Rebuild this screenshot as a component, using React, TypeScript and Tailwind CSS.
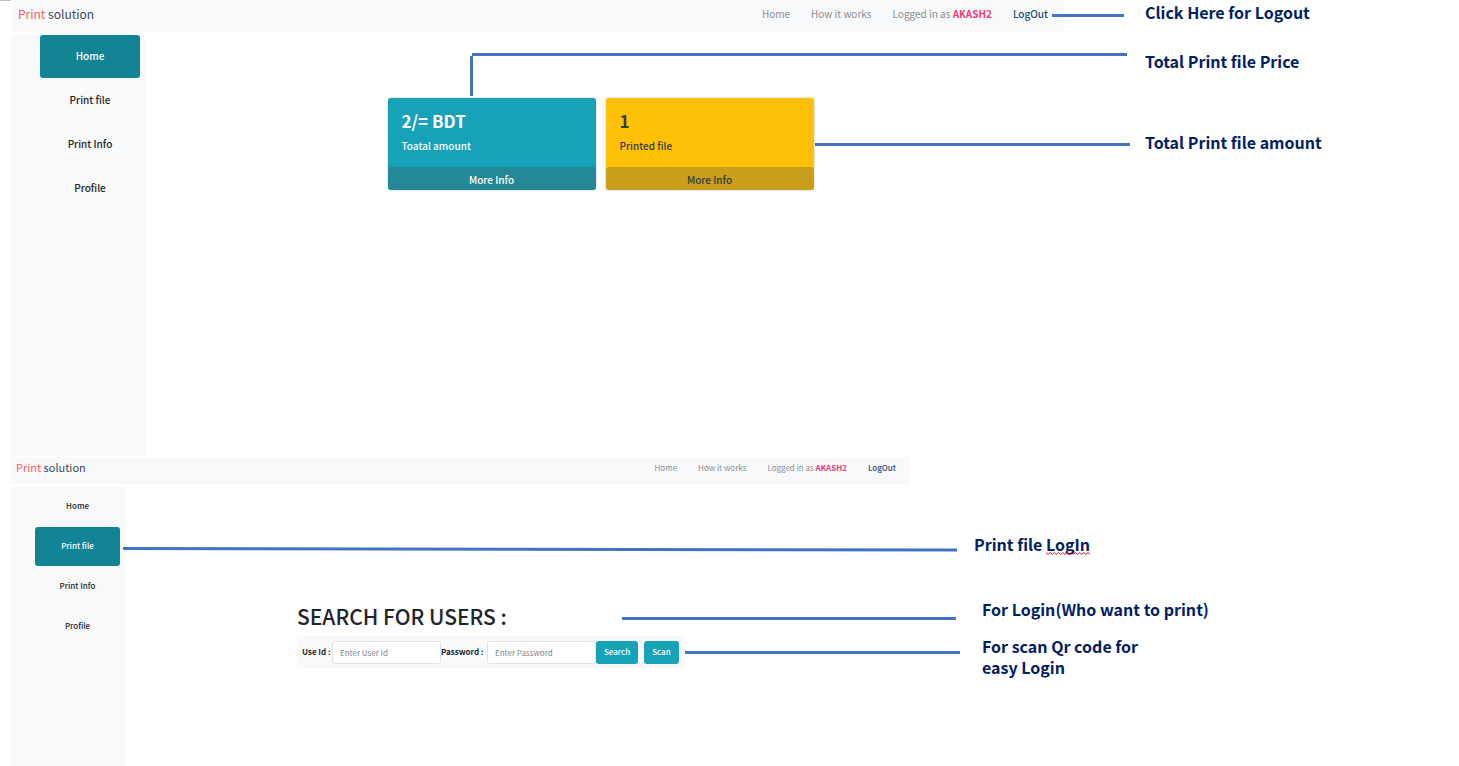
import React from "react";

type Size = "large" | "small";

const menu = ["Home", "Print file", "Print Info", "Profile"];

function TopBar({ size }: { size: Size }) {
  const large = size === "large";
  return (
    <header
      className={
        large
          ? "ml-px flex h-8 items-start justify-between bg-[#f8f9fb] pl-1.5 pr-4 pt-1"
          : "flex h-[27px] items-start justify-between bg-[#f8f9fb] pl-[5px] pr-3.5"
      }
    >
      <a
        href="#"
        className={
          large
            ? "text-[12px] leading-5 text-[#3d4654]"
            : "text-[11px] leading-5 text-[#3d4654]"
        }
      >
        <span className="text-[#ff5a5f]">Print</span> solution
      </a>
      <nav
        className={
          large
            ? "flex gap-[21px] text-[10px] leading-5 text-[#8b8c8e]"
            : "flex gap-[21px] text-[8px] leading-[22px] text-[#8b8c8e]"
        }
      >
        <a href="#">Home</a>
        <a href="#">How it works</a>
        <span>
          Logged in as <b className="text-[#ec407a]">AKASH2</b>
        </span>
        <a href="#" className="font-medium text-[#1f4a73]">
          LogOut
        </a>
      </nav>
    </header>
  );
}

function SideMenu({ size, active }: { size: Size; active: string }) {
  const large = size === "large";
  return (
    <nav
      className={
        large
          ? "flex w-[134px] shrink-0 flex-col gap-px bg-[#f8f9fb] pl-[29px] pr-[5px] text-[10px]"
          : "flex w-[114px] shrink-0 flex-col gap-px bg-[#f8f9fb] pl-6 pr-[5px] text-[8px]"
      }
    >
      {menu.map((item) => (
        <a
          key={item}
          href="#"
          className={`flex items-center justify-center rounded-[3px] pb-0.5 font-medium ${
            large ? "h-[43px]" : "h-[39px]"
          } ${item === active ? "bg-[#138496] text-white" : "text-[#212529]"}`}
        >
          {item}
        </a>
      ))}
    </nav>
  );
}

function Card(props: { value: string; label: string; tone: string; foot: string }) {
  return (
    <article
      className={`w-[208px] overflow-hidden rounded-[3px] shadow-[0_0_2px_rgba(0,0,0,0.3)] ${props.tone}`}
    >
      <div className="h-[69px] px-3.5 pt-[11px]">
        <h3 className="text-[17px] font-bold leading-6">{props.value}</h3>
        <p className="pt-[5px] text-[10px] font-medium leading-4">{props.label}</p>
      </div>
      <a
        href="#"
        className={`block h-[23px] rounded-[3px] text-center text-[10px] font-medium leading-[26px] ${props.foot}`}
      >
        More Info
      </a>
    </article>
  );
}

function Connectors() {
  return (
    <svg
      className="pointer-events-none absolute inset-0 h-full w-full"
      viewBox="0 0 1459 766"
      preserveAspectRatio="none"
      stroke="#4472c4"
      strokeWidth="3"
      fill="none"
      aria-hidden="true"
    >
      <path d="M1052 15.5H1124" />
      <path d="M472 54.5H1127" />
      <path d="M471.500 56V96" />
      <path d="M815 144.500H1130" />
      <path d="M123 548.500L957 550" />
      <path d="M622 618.500H956" />
      <path d="M685 652.500H960" />
      <path d="M0 0.500H11" stroke="#c0c0c0" strokeWidth="1" />
    </svg>
  );
}

function Squiggle() {
  return (
    <svg
      className="absolute left-0 top-full -mt-1 h-[3px] w-full"
      viewBox="0 0 42 3"
      preserveAspectRatio="none"
      fill="none"
      stroke="#e00000"
      strokeWidth="0.9"
      aria-hidden="true"
    >
      <path d="M0 .5l2 2 2-2 2 2 2-2 2 2 2-2 2 2 2-2 2 2 2-2 2 2 2-2 2 2 2-2 2 2 2-2 2 2 2-2 2 2 2-2 2 2" />
    </svg>
  );
}

const inputClass =
  "h-[23px] w-[109px] rounded-[3px] border border-[#dfe2e6] bg-white px-[7px] text-[8px] font-normal text-[#495057] placeholder:text-[#7d858c]";
const buttonClass =
  "h-[23px] rounded-[3px] bg-[#17a2b8] px-2 text-[8px] font-medium text-white";

export default function App() {
  return (
    <main className="relative flex min-h-screen flex-col bg-white pl-[11px] font-['Noto_Sans_CJK_SC',sans-serif]">
      <section className="grid grid-cols-[1053fr_395fr]">
        <div className="flex flex-col gap-[3px]">
          <TopBar size="large" />
          <div className="flex h-[421px]">
            <SideMenu size="large" active="Home" />
            <div className="flex flex-1 items-start justify-center gap-2.5 pr-2 pt-[63px]">
              <Card
                value="2/= BDT"
                label="Toatal amount"
                tone="bg-[#17a2b8] text-white"
                foot="bg-[#258896]"
              />
              <Card
                value="1"
                label="Printed file"
                tone="bg-[#ffc107] text-[#343a40]"
                foot="bg-[#c99e1a]"
              />
            </div>
          </div>
        </div>
        <aside className="flex flex-col pl-[81px] text-[16px] font-bold leading-6 text-[#002060]">
          <p>Click Here for Logout</p>
          <p className="pt-[25px]">Total Print file Price</p>
          <p className="pt-[57px]">Total Print file amount</p>
        </aside>
      </section>

      <section className="grid flex-1 grid-cols-[899fr_549fr] pt-px">
        <div className="flex flex-col gap-[3px]">
          <TopBar size="small" />
          <div className="flex flex-1">
            <SideMenu size="small" active="Print file" />
            <div className="flex flex-1 flex-col items-start pl-[172px] pt-[113px]">
              <h2 className="text-[21px] font-medium leading-8 text-[#212529]">
                SEARCH FOR USERS :
              </h2>
              <form
                className="mt-1 flex h-8 items-center bg-[#f8f9fb] px-[5px] text-[8px] font-bold text-[#212529]"
                onSubmit={(e) => e.preventDefault()}
              >
                <label htmlFor="user-id" className="w-[30px] whitespace-nowrap">
                  Use Id :
                </label>
                <input id="user-id" type="text" placeholder="Enter User Id" className={inputClass} />
                <label htmlFor="password" className="w-[46px] whitespace-nowrap">
                  Password :
                </label>
                <input
                  id="password"
                  type="password"
                  placeholder="Enter Password"
                  className={inputClass}
                />
                <button type="submit" className={buttonClass}>
                  Search
                </button>
                <button type="button" className={`${buttonClass} ml-1.5`}>
                  Scan
                </button>
              </form>
            </div>
          </div>
        </div>
        <aside className="flex flex-col items-start pl-16 pt-[75px] text-[16px] font-bold leading-6 text-[#002060]">
          <p>
            Print file{" "}
            <span className="relative inline-block">
              LogIn
              <Squiggle />
            </span>
          </p>
          <p className="ml-2 pt-[41px]">For Login(Who want to print)</p>
          <p className="ml-2 w-44 pt-[15px] leading-[21px]">For scan Qr code for easy Login</p>
        </aside>
      </section>

      <Connectors />
    </main>
  );
}
